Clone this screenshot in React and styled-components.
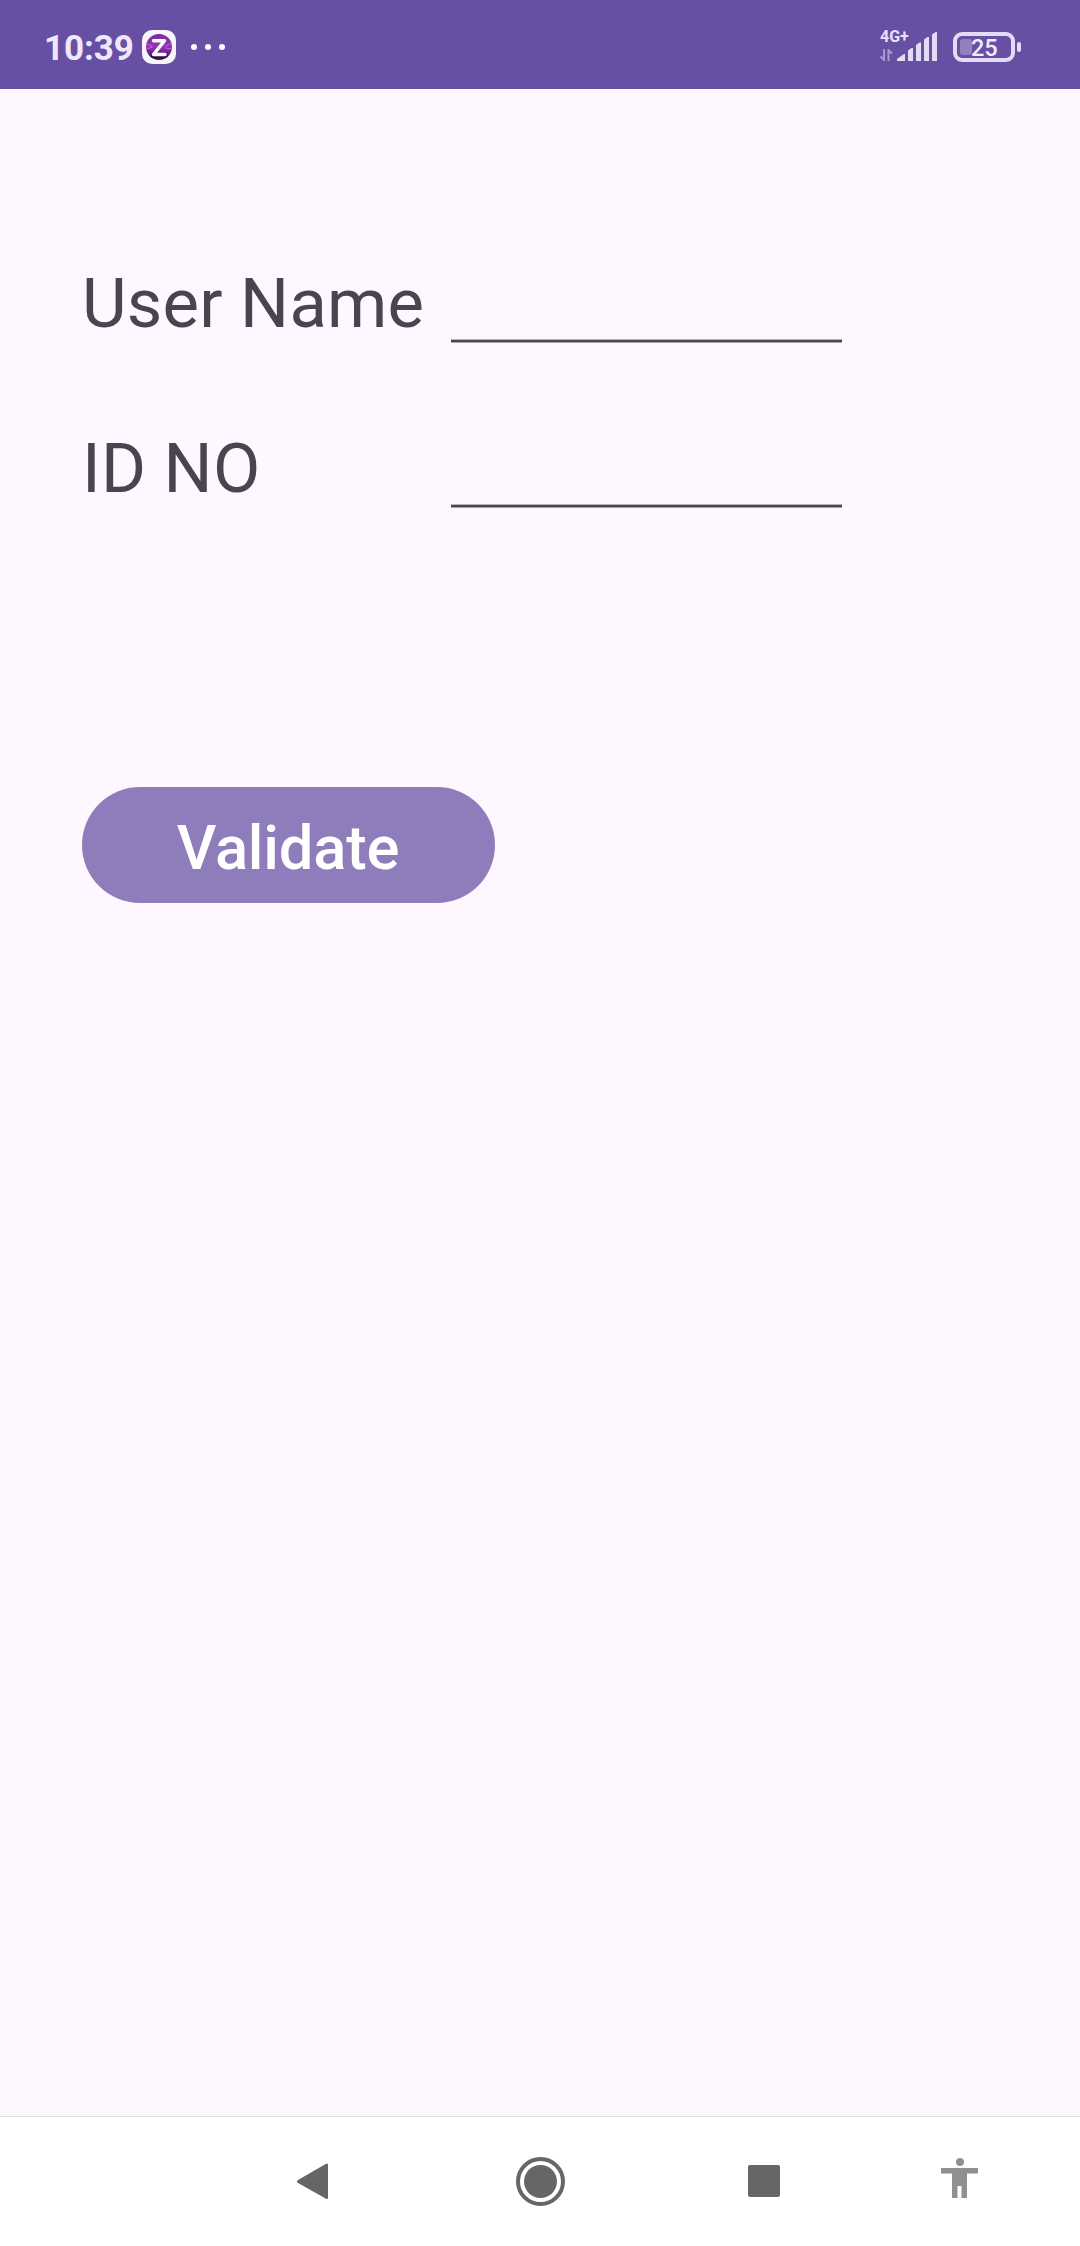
import React from "react";
import styled, { createGlobalStyle } from "styled-components";

const GlobalStyle = createGlobalStyle`
  *, *::before, *::after { box-sizing: border-box; }
  body { margin: 0; background: #fef7ff; font-family: Roboto, "Noto Sans", sans-serif; }
`;

const Screen = styled.div`
  display: flex;
  flex-direction: column;
  width: 1080px;
  height: 2246px;
  background: #fef7ff;
  overflow: hidden;
`;

const StatusBar = styled.header`
  display: flex;
  justify-content: space-between;
  flex: none;
  height: 89px;
  padding: 0 59px 0 44px;
  background: #6750a3;
`;

const StatusGroup = styled.div`
  display: flex;
  align-items: center;
  height: 94px;
`;

const Clock = styled.time`
  width: 98px;
  color: #efe8fb;
  font-size: 35px;
  font-weight: 700;
  letter-spacing: -0.1px;
  line-height: 40px;
  padding-top: 3px;
  white-space: nowrap;
`;

const Dots = styled.div`
  display: flex;
  gap: 8px;
  margin-left: 15px;
`;

const Dot = styled.span`
  width: 6px;
  height: 6px;
  border-radius: 50%;
  background: #fff;
`;

const Network = styled.div`
  display: flex;
  align-items: flex-end;
  height: 30px;
  margin: 0 16px 2px 0;
`;

const NetworkInfo = styled.div`
  display: flex;
  flex-direction: column;
  justify-content: space-between;
  width: 17px;
  height: 30px;
`;

const NetworkType = styled.span`
  color: #e9e1f7;
  font-size: 16px;
  font-weight: 700;
  line-height: 11px;
  white-space: nowrap;
`;

const Battery = styled.div`
  display: flex;
  align-items: center;
  gap: 2px;
`;

const BatteryShell = styled.div`
  display: flex;
  align-items: center;
  width: 62px;
  height: 30px;
  padding-left: 3px;
  border: 4px solid #e4dcf4;
  border-radius: 9px;
`;

const BatteryFill = styled.span`
  width: 12px;
  height: 16px;
  border-radius: 3px;
  background: #9380bf;
`;

const BatteryText = styled.span`
  color: #f0eafa;
  font-size: 23.5px;
  font-weight: 500;
  line-height: 22px;
  margin-left: -1px;
  padding-top: 2px;
`;

const BatteryNub = styled.span`
  width: 4px;
  height: 10px;
  border-radius: 2px;
  background: #e4dcf4;
`;

const Form = styled.main`
  display: flex;
  flex: 1;
  flex-direction: column;
  align-items: flex-start;
  padding: 173px 0 0 82px;
`;

const Field = styled.label`
  display: flex;
  align-items: flex-start;
  height: 81px;
  margin-bottom: 84px;
`;

const Label = styled.span`
  width: 369px;
  padding-top: 1px;
  color: #49454e;
  font-size: 68.75px;
  letter-spacing: 0.25px;
  line-height: 81px;
  white-space: nowrap;
`;

const Input = styled.input`
  width: 391px;
  height: 81px;
  padding: 0;
  border: 0;
  border-radius: 0;
  outline: none;
  background: linear-gradient(#b9b3bc 0 1px, #4b474f 1px 3px, #a8a2ab 3px 4px) bottom / 100% 4px no-repeat;
  color: #49454e;
  font: inherit;
  font-size: 49px;
`;

const Button = styled.button`
  width: 413px;
  height: 116px;
  margin-top: 195px;
  padding: 6px 1px 0 0;
  border: 0;
  border-radius: 58px;
  background: #8e7dba;
  color: #fff;
  font-family: inherit;
  font-size: 61.5px;
  font-weight: 550;
  letter-spacing: -0.2px;
  line-height: 70px;
`;

const NavBar = styled.nav`
  display: grid;
  grid-template-columns: 225px 224px 198px 44px;
  align-items: start;
  flex: none;
  height: 130px;
  padding: 40px 0 0 291px;
  border-top: 1px solid #e1e1e1;
  background: #fff;
`;

const NavIcon = styled.svg`
  display: block;
`;

function AppBadge() {
  return (
    <svg width="34" height="34" viewBox="0 0 34 34">
      <defs>
        <linearGradient id="orb" x1="0" y1="0" x2="0" y2="1">
          <stop offset="0" stopColor="#7a2ba0" />
          <stop offset="0.5" stopColor="#9335b4" />
          <stop offset="0.75" stopColor="#65218a" />
          <stop offset="0.88" stopColor="#2b0d45" />
          <stop offset="1" stopColor="#3a1458" />
        </linearGradient>
      </defs>
      <rect width="34" height="34" rx="10" fill="#f7f5fa" />
      <circle cx="17" cy="17" r="13" fill="url(#orb)" />
      <path d="M4.500 14l6 2M4.500 19l6-2M29.500 13l-6 3M29.500 19l-6-1" stroke="#c566d8" strokeWidth="1" />
      <path d="M11.500 10.700H22.500L11.500 24.500H23" fill="none" stroke="#fff" strokeWidth="3.400" strokeLinejoin="round" strokeLinecap="round" />
    </svg>
  );
}

function DataArrows() {
  return (
    <svg width="13" height="12" viewBox="0 0 13 12" fill="none" stroke="#a898cf" strokeWidth="2">
      <path d="M4 0V12M4 11L0.500 7.500" />
      <path d="M8.500 12V0M8.500 1L12 4.500" />
    </svg>
  );
}

function Signal() {
  return (
    <svg width="40" height="29" viewBox="0 0 40 29" fill="#e4dcf4">
      <path d="M0 29V27L7 22H8V29Z" />
      <path d="M11 29V18.500L14.500 16H16V29Z" />
      <path d="M19 29V13L22.500 10.500H24V29Z" />
      <path d="M27 29V7.500L30.500 5H32V29Z" />
      <path d="M35 29V2.500L38.500 0H40V29Z" />
    </svg>
  );
}

export default function App() {
  return (
    <>
      <GlobalStyle />
      <Screen>
        <StatusBar>
          <StatusGroup>
            <Clock>10:39</Clock>
            <AppBadge />
            <Dots>
              <Dot />
              <Dot />
              <Dot />
            </Dots>
          </StatusGroup>
          <StatusGroup>
            <Network>
              <NetworkInfo>
                <NetworkType>4G+</NetworkType>
                <DataArrows />
              </NetworkInfo>
              <Signal />
            </Network>
            <Battery>
              <BatteryShell>
                <BatteryFill />
                <BatteryText>25</BatteryText>
              </BatteryShell>
              <BatteryNub />
            </Battery>
          </StatusGroup>
        </StatusBar>
        <Form>
          <Field>
            <Label>User Name</Label>
            <Input type="text" aria-label="User Name" />
          </Field>
          <Field>
            <Label>ID NO</Label>
            <Input type="text" aria-label="ID NO" />
          </Field>
          <Button type="button">Validate</Button>
        </Form>
        <NavBar>
          <NavIcon width="48" height="50" viewBox="0 0 48 50" fill="#666">
            <path d="M35.500 6.500Q37 6 37 8V40.500Q37 42.500 35.500 42L7 26Q5 24.500 7 23Z" />
          </NavIcon>
          <NavIcon width="50" height="50" viewBox="0 0 50 50">
            <circle cx="24.500" cy="24.500" r="22.500" fill="none" stroke="#666" strokeWidth="4" />
            <circle cx="24.500" cy="24.500" r="16.500" fill="#666" />
          </NavIcon>
          <NavIcon width="48" height="50" viewBox="0 0 48 50" fill="#666">
            <rect x="8" y="8" width="32" height="32" rx="2" />
          </NavIcon>
          <NavIcon width="44" height="50" viewBox="0 0 44 50" fill="#909090">
            <circle cx="22" cy="5" r="4" />
            <path d="M3 11H40V16.500H29V41H23.500V29H19.500V41H14V16.500H3Z" />
          </NavIcon>
        </NavBar>
      </Screen>
    </>
  );
}
